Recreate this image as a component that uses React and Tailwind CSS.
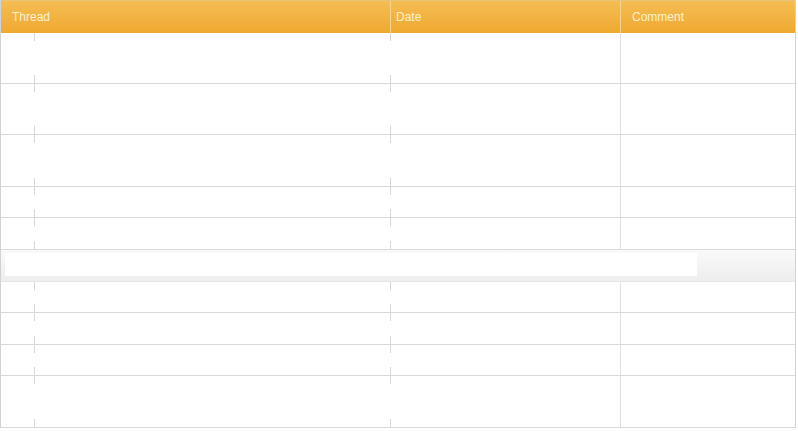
// Thread / Date / Comment grid with empty rows
const rows = [51, 51, 52, 31, 32, "band", 31, 32, 31, 52];

function Tick() {
  return <div className="h-[8px] border-l border-[#d6d6d6]" />;
}

function TickCol() {
  return (
    <div className="flex flex-col justify-between">
      <Tick />
      <Tick />
    </div>
  );
}

function Row({ h }) {
  return (
    <div
      className="grid grid-cols-[33px_356px_230px_1fr] border-b border-[#d9d9d9]"
      style={{ height: h }}
    >
      <div />
      <TickCol />
      <TickCol />
      <div className="border-l border-[#e0e0e0]" />
    </div>
  );
}

function Band() {
  return (
    <div className="h-[32px] border-b border-[#e6e6e6] bg-gradient-to-b from-[#fafafa] to-[#ededed] pl-[4px] pt-[3px]">
      <div className="h-[23px] w-[692px] bg-white" />
    </div>
  );
}

export default function App() {
  return (
    <div className="h-[431px] w-[798px] bg-white font-['Liberation_Sans',Arial,sans-serif]">
      <div className="w-[796px] border-x border-[#d2d2d2]">
        {/* header */}
        <div className="grid h-[33px] grid-cols-[389px_230px_1fr] border-t border-[#e6c57a] bg-gradient-to-b from-[#f5bd52] to-[#eea92f] text-[12px] text-[#fdf1d2]">
          <div className="pl-[11px] pt-[7px]">Thread</div>
          <div className="border-l border-[#f7d48e] pl-[5px] pt-[7px]">Date</div>
          <div className="border-l border-[#f7d48e] pl-[11px] pt-[7px]">Comment</div>
        </div>
        {rows.map((h, i) => (h === "band" ? <Band key={i} /> : <Row key={i} h={h} />))}
      </div>
    </div>
  );
}
